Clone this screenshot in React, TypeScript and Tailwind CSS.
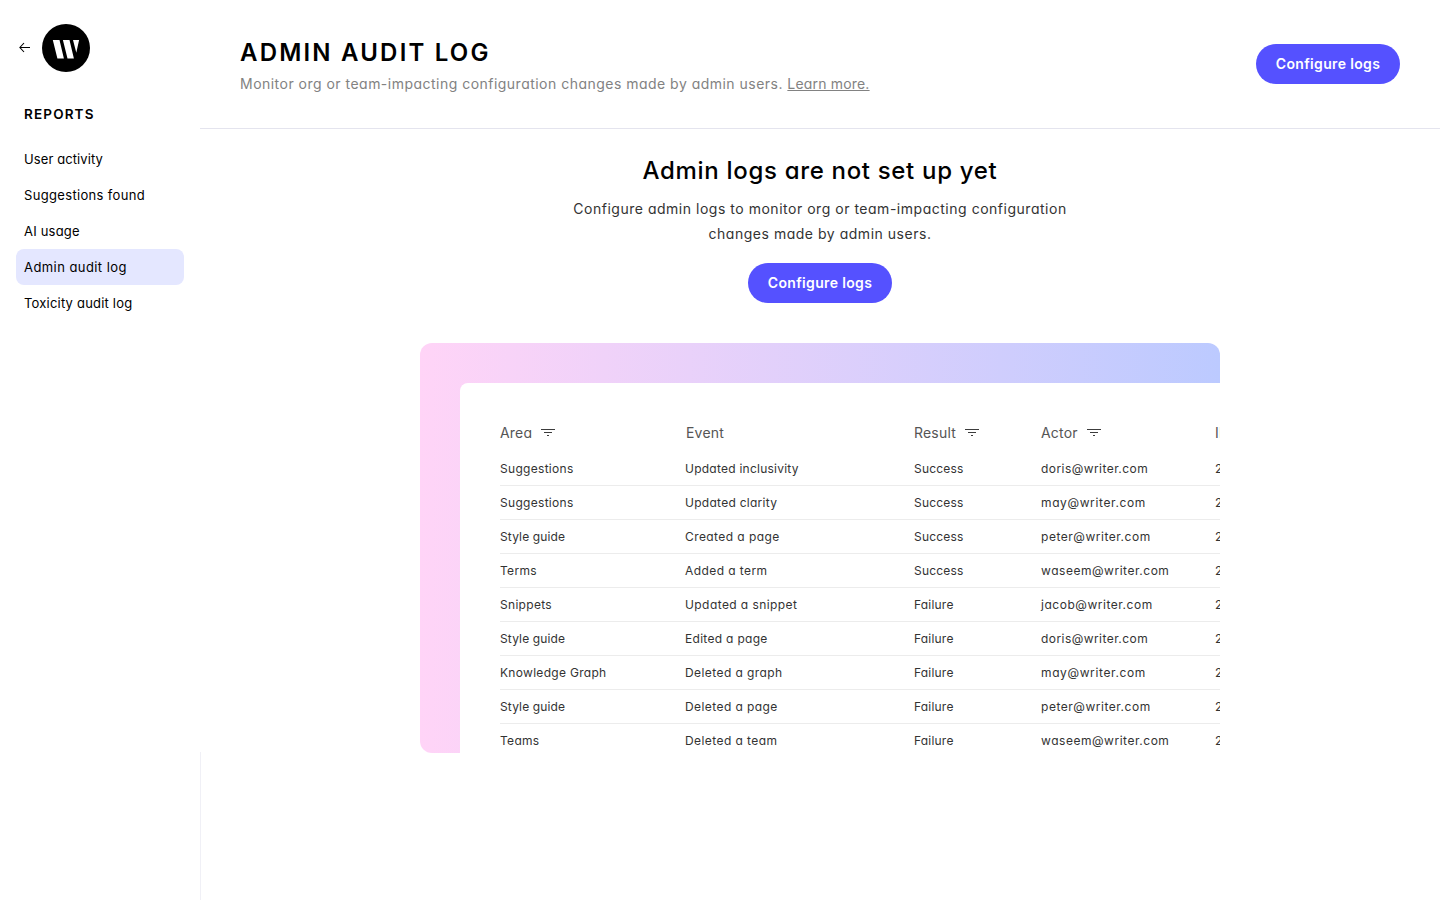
import clsx from "clsx";

const links = [
  { label: "User activity", tracking: "tracking-[0.1px]" },
  { label: "Suggestions found", tracking: "tracking-[0.33px]" },
  { label: "AI usage", tracking: "tracking-[0.2px]" },
  { label: "Admin audit log", tracking: "tracking-[0.43px]", active: true },
  { label: "Toxicity audit log", tracking: "tracking-[0.2px]" },
];

const rows = [
  ["Suggestions", "Updated inclusivity", "Success", "doris@writer.com"],
  ["Suggestions", "Updated clarity", "Success", "may@writer.com"],
  ["Style guide", "Created a page", "Success", "peter@writer.com"],
  ["Terms", "Added a term", "Success", "waseem@writer.com"],
  ["Snippets", "Updated a snippet", "Failure", "jacob@writer.com"],
  ["Style guide", "Edited a page", "Failure", "doris@writer.com"],
  ["Knowledge Graph", "Deleted a graph", "Failure", "may@writer.com"],
  ["Style guide", "Deleted a page", "Failure", "peter@writer.com"],
  ["Teams", "Deleted a team", "Failure", "waseem@writer.com"],
];

// cells that need their own spacing, the rest use the column's
const cellTracking: Record<string, string> = {
  "Style guide": "tracking-[0.14px]",
  "Updated inclusivity": "tracking-[0.24px]",
  "Updated clarity": "tracking-[0.27px]",
  "Edited a page": "tracking-[0.3px]",
  "doris@writer.com": "tracking-[0.44px]",
  "may@writer.com": "tracking-[0.62px]",
};

const FilterIcon = () => (
  <svg width="14" height="7" viewBox="0 0 14 7" className="mb-px shrink-0" shapeRendering="crispEdges">
    <path d="M0 0.5h14M3 3.5h8M6 6.5h2" stroke="#3c3c3c" fill="none" />
  </svg>
);

const ConfigureButton = () => (
  <button className="h-10 w-36 shrink-0 rounded-full bg-[#5551ff] text-sm font-semibold tracking-[0.34px] text-white">
    Configure logs
  </button>
);

const Sidebar = () => (
  <aside className="flex w-[200px] shrink-0 flex-col">
    <div className="flex items-center gap-3 pt-6 pl-[19px]">
      <svg width="11" height="11" viewBox="0 0 11 11" fill="none" stroke="#000" strokeWidth="1.1" className="mb-px">
        <path d="M11 5.5H1M5 1L0.9 5.5L5 10" />
      </svg>
      <svg width="48" height="48" viewBox="0 0 48 48">
        <circle cx="24" cy="24" r="24" />
        <path d="M10.8 16h6.7l4.4 18.5h-6.5zM20.9 16h6.6l4.4 18.5h-6.4zM31 16h6.1l-2.8 12.8z" fill="#fff" />
      </svg>
    </div>
    <h2 className="mt-8 pl-6 text-[13.5px] leading-5 font-semibold tracking-[1.15px]">REPORTS</h2>
    <nav className="mt-[17px] flex flex-col px-4">
      {links.map((link) => (
        <a
          key={link.label}
          className={clsx(
            "flex h-9 items-center rounded-lg px-2 pt-0.5 text-[13px] whitespace-nowrap",
            link.tracking,
            link.active && "bg-[#e4e7ff]"
          )}
        >
          {link.label}
        </a>
      ))}
    </nav>
  </aside>
);

const LogsPreview = () => (
  <div className="mt-10 h-[410px] w-[800px] overflow-hidden rounded-xl rounded-br-none bg-linear-to-r from-[#ffd4f7] to-[#bccaff] pt-10 pl-10">
    <div className="h-full overflow-hidden rounded-tl-lg bg-white pt-10 pl-10">
      <div className="grid h-[29px] w-[800px] grid-cols-[185px_229px_127px_174px_85px] text-sm leading-5 tracking-[0.2px] text-[#555]">
        <div className="flex h-5 items-center gap-[9px]">
          Area <FilterIcon />
        </div>
        <div className="pl-px">Event</div>
        <div className="flex h-5 items-center gap-[9px]">
          Result <FilterIcon />
        </div>
        <div className="flex h-5 items-center gap-[9px]">
          Actor <FilterIcon />
        </div>
        <div>ID</div>
      </div>
      {rows.map(([area, event, result, actor], index) => (
        <div
          key={index}
          className="grid h-[34px] w-[800px] grid-cols-[185px_229px_127px_174px_85px] items-center border-b border-[#ececec] text-xs text-[#333]"
        >
          <div className={cellTracking[area] ?? "tracking-[0.3px]"}>{area}</div>
          <div className={cellTracking[event] ?? "tracking-[0.42px]"}>{event}</div>
          <div className="tracking-[0.2px]">{result}</div>
          <div className={cellTracking[actor] ?? "tracking-[0.53px]"}>{actor}</div>
          <div>2023</div>
        </div>
      ))}
    </div>
  </div>
);

export default function App() {
  return (
    <div className="flex h-screen overflow-hidden bg-white font-['Inter',sans-serif] text-black [font-feature-settings:'cv11']">
      <Sidebar />
      <main className="flex grow flex-col">
        <header className="flex h-[129px] shrink-0 items-start justify-between border-b border-[#e4e4ee] px-10">
          <div className="flex flex-col pt-[35px]">
            <h1 className="text-2xl leading-9 font-semibold tracking-[2.2px]">ADMIN AUDIT LOG</h1>
            <p className="mt-px text-sm leading-6 tracking-[0.48px] text-[#828282]">
              Monitor org or team-impacting configuration changes made by admin users.{" "}
              <a className="tracking-[0.18px] underline">Learn more.</a>
            </p>
          </div>
          <div className="pt-[44.4px]">
            <ConfigureButton />
          </div>
        </header>
        <div className="flex flex-col items-center">
          <h2 className="mt-6 text-2xl leading-9 font-medium tracking-[0.68px]">Admin logs are not set up yet</h2>
          <p className="mt-[7px] w-[520px] text-center text-sm leading-[25px] tracking-[0.52px] text-[#333]">
            Configure admin logs to monitor org or team-impacting configuration
            <br />
            changes made by admin users.
          </p>
          <div className="mt-[17px]">
            <ConfigureButton />
          </div>
          <LogsPreview />
        </div>
        <div className="-mt-px grow border-l border-[#f0f0f6]" />
      </main>
    </div>
  );
}
